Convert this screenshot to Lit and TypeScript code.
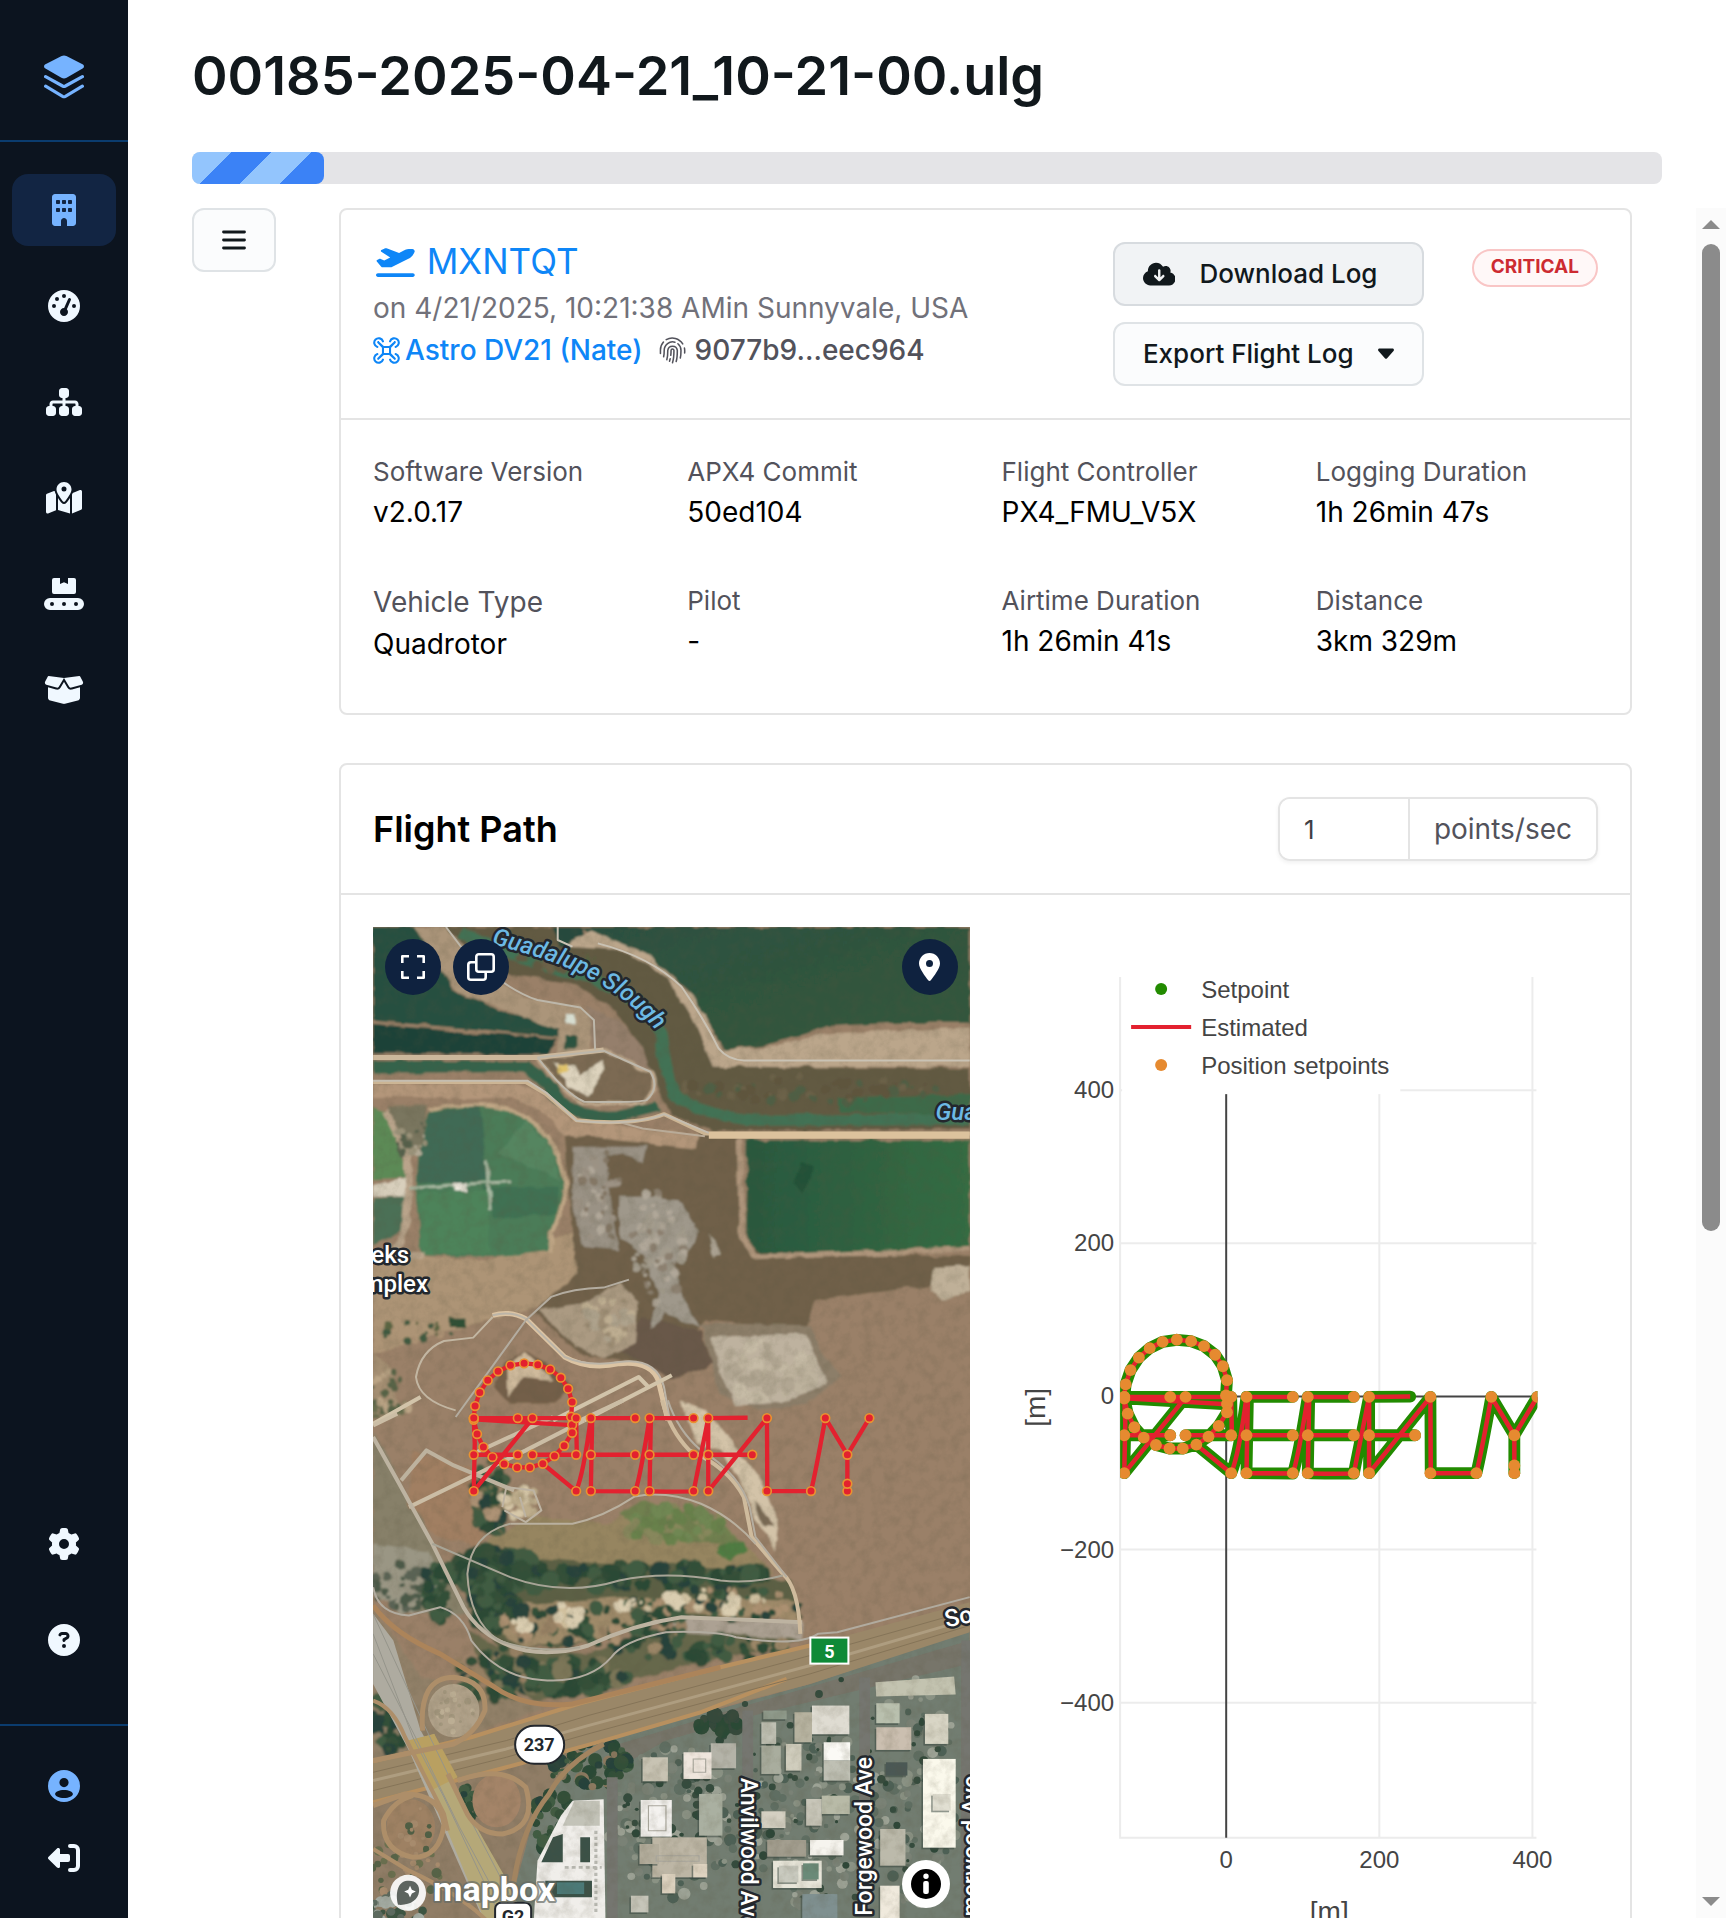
import { LitElement, html, svg, css } from "lit";
import { customElement } from "lit/decorators.js";

/* ---------- icons ---------- */

const icon = (viewBox: string, body: unknown, cls = "") =>
  html`<svg class="icon ${cls}" viewBox=${viewBox} fill="currentColor" aria-hidden="true">${body}</svg>`;

const icons = {
  layers: icon("0 0 40 46", svg`
    <path d="M17.6 1.1a6 6 0 0 1 4.8 0L39 9.6c1.3.7 1.3 2.9 0 3.6l-16.4 9.6a5.500 5.500 0 0 1-5.200 0L1 13.200c-1.300-.7-1.300-2.900 0-3.600z"/>
    <path d="M1.600 21.600 18.600 31q1.400.7 2.800 0l17-9.400M1.600 31.200l17 10.200q1.400.7 2.800 0l17-10.200" fill="none" stroke="currentColor" stroke-width="3.200" stroke-linecap="round"/>`, "logo"),
  building: icon("0 0 384 512", svg`<path d="M48 0C21.500 0 0 21.500 0 48V464c0 26.500 21.500 48 48 48h96V432c0-26.500 21.500-48 48-48s48 21.500 48 48v80h96c26.500 0 48-21.500 48-48V48c0-26.500-21.500-48-48-48H48zM64 240c0-8.800 7.200-16 16-16h32c8.800 0 16 7.200 16 16v32c0 8.800-7.200 16-16 16H80c-8.800 0-16-7.200-16-16V240zm112-16h32c8.800 0 16 7.200 16 16v32c0 8.800-7.200 16-16 16H176c-8.800 0-16-7.200-16-16V240c0-8.800 7.200-16 16-16zm80 16c0-8.800 7.200-16 16-16h32c8.800 0 16 7.200 16 16v32c0 8.800-7.200 16-16 16H272c-8.800 0-16-7.200-16-16V240zM80 96h32c8.800 0 16 7.200 16 16v32c0 8.800-7.200 16-16 16H80c-8.800 0-16-7.200-16-16V112c0-8.800 7.200-16 16-16zm80 16c0-8.800 7.200-16 16-16h32c8.800 0 16 7.200 16 16v32c0 8.800-7.200 16-16 16H176c-8.800 0-16-7.200-16-16V112zM272 96h32c8.800 0 16 7.200 16 16v32c0 8.800-7.200 16-16 16H272c-8.800 0-16-7.200-16-16V112c0-8.800 7.200-16 16-16z"/>`),
  gauge: icon("0 0 512 512", svg`<path d="M0 256a256 256 0 1 1 512 0A256 256 0 1 1 0 256zM288 96a32 32 0 1 0 -64 0 32 32 0 1 0 64 0zM256 416c35.300 0 64-28.700 64-64c0-17.400-6.900-33.100-18.100-44.600L366 161.700c5.300-12.100-.2-26.300-12.300-31.600s-26.300 .2-31.600 12.300L257.900 288c-.6 0-1.300 0-1.900 0c-35.300 0-64 28.700-64 64s28.700 64 64 64zM176 144a32 32 0 1 0 -64 0 32 32 0 1 0 64 0zM96 288a32 32 0 1 0 0-64 32 32 0 1 0 0 64zm352-32a32 32 0 1 0 -64 0 32 32 0 1 0 64 0z"/>`),
  sitemap: icon("0 0 576 512", svg`<path d="M208 80c0-26.500 21.500-48 48-48h64c26.500 0 48 21.500 48 48v64c0 26.500-21.500 48-48 48h-8v40H464c30.900 0 56 25.100 56 56v32h8c26.500 0 48 21.500 48 48v64c0 26.500-21.500 48-48 48H464c-26.500 0-48-21.500-48-48V368c0-26.500 21.500-48 48-48h8V288c0-4.400-3.600-8-8-8H312v40h8c26.500 0 48 21.500 48 48v64c0 26.500-21.500 48-48 48H256c-26.500 0-48-21.500-48-48V368c0-26.500 21.500-48 48-48h8V280H112c-4.400 0-8 3.600-8 8v32h8c26.500 0 48 21.500 48 48v64c0 26.500-21.500 48-48 48H48c-26.500 0-48-21.500-48-48V368c0-26.500 21.500-48 48-48h8V288c0-30.900 25.100-56 56-56H264V192h-8c-26.500 0-48-21.500-48-48V80z"/>`),
  map: icon("0 0 576 512", svg`<path d="M408 120c0 54.600-73.100 151.900-105.200 192c-7.700 9.600-22 9.600-29.600 0C241.100 271.900 168 174.600 168 120C168 53.700 221.700 0 288 0s120 53.700 120 120zm8 80.400c3.500-6.900 6.700-13.800 9.600-20.600c.5-1.200 1-2.500 1.500-3.700l116-46.400C558.900 123.400 576 135 576 152V422.800c0 9.800-6 18.600-15.100 22.300L416 503V200.400zM137.600 138.300c2.400 14.100 7.200 28.300 12.800 41.500c2.900 6.800 6.100 13.700 9.600 20.600V451.800L32.900 502.700C17.100 509 0 497.400 0 480.400V209.600c0-9.800 6-18.600 15.100-22.300l122.600-49zM327.800 332c13.900-17.400 35.700-45.700 56.200-77V504.300L192 449.400V255c20.500 31.300 42.300 59.600 56.200 77c20.500 25.600 59.100 25.600 79.600 0zM288 152a40 40 0 1 0 0-80 40 40 0 1 0 0 80z"/>`),
  conveyor: icon("0 0 40 32", svg`<path fill-rule="evenodd" d="M10 0h6v6l4-1.800L24 6V0h6a2 2 0 0 1 2 2v12a2 2 0 0 1-2 2H10a2 2 0 0 1-2-2V2a2 2 0 0 1 2-2zM6 20h28a6 6 0 0 1 0 12H6a6 6 0 0 1 0-12zm2 4a2 2 0 1 0 0 4 2 2 0 0 0 0-4zm12 0a2 2 0 1 0 0 4 2 2 0 0 0 0-4zm12 0a2 2 0 1 0 0 4 2 2 0 0 0 0-4z"/>`),
  box: icon("0 0 640 512", svg`<path d="M58.900 42.100c3-6.100 9.600-9.600 16.300-8.700L320 64 564.800 33.400c6.700-.8 13.300 2.700 16.300 8.700l41.700 83.400c9 17.900-.6 39.600-19.800 45.100L439.600 217.300c-13.900 4-28.800-1.900-36.200-14.300L320 64 236.600 203c-7.400 12.400-22.300 18.300-36.200 14.300L37.100 170.600c-19.300-5.500-28.800-27.200-19.800-45.100L58.900 42.100zM321.100 128l54.900 91.400c14.900 24.800 44.600 36.600 72.500 28.600L576 211.600v167c0 22-15 41.200-36.400 46.600l-204.100 51c-10.200 2.600-20.900 2.600-31 0l-204.100-51C79 419.700 64 400.500 64 378.500v-167L191.600 248c27.800 8 57.600-3.800 72.500-28.600L318.900 128h2.200z"/>`),
  gear: icon("0 0 512 512", svg`<path d="M495.900 166.600c3.200 8.700 .5 18.400-6.400 24.600l-43.300 39.400c1.100 8.300 1.700 16.800 1.700 25.400s-.6 17.100-1.700 25.400l43.300 39.400c6.900 6.200 9.600 15.900 6.400 24.600c-4.400 11.900-9.700 23.300-15.800 34.300l-4.700 8.100c-6.600 11-14 21.400-22.100 31.200c-5.900 7.200-15.700 9.600-24.500 6.800l-55.700-17.700c-13.400 10.300-28.200 18.900-44 25.400l-12.500 57.100c-2 9.100-9 16.300-18.200 17.800c-13.800 2.300-28 3.500-42.500 3.500s-28.700-1.200-42.500-3.500c-9.200-1.500-16.200-8.700-18.200-17.800l-12.500-57.100c-15.800-6.500-30.600-15.100-44-25.400L83.100 425.900c-8.800 2.800-18.600 .3-24.500-6.800c-8.100-9.800-15.500-20.200-22.100-31.200l-4.700-8.100c-6.100-11-11.400-22.400-15.800-34.300c-3.200-8.700-.5-18.400 6.400-24.600l43.300-39.400C64.600 273.100 64 264.600 64 256s.6-17.100 1.700-25.400L22.400 191.200c-6.900-6.200-9.600-15.900-6.400-24.600c4.400-11.900 9.700-23.300 15.800-34.300l4.700-8.100c6.600-11 14-21.400 22.100-31.200c5.900-7.200 15.700-9.600 24.500-6.800l55.700 17.700c13.400-10.300 28.200-18.900 44-25.400l12.500-57.100c2-9.100 9-16.300 18.200-17.800C227.300 1.200 241.500 0 256 0s28.700 1.200 42.500 3.500c9.200 1.500 16.200 8.700 18.200 17.800l12.500 57.100c15.800 6.500 30.600 15.100 44 25.400l55.700-17.700c8.800-2.800 18.600-.3 24.500 6.800c8.100 9.800 15.500 20.200 22.100 31.200l4.700 8.100c6.100 11 11.400 22.400 15.800 34.300zM256 336a80 80 0 1 0 0-160 80 80 0 1 0 0 160z"/>`),
  help: icon("0 0 512 512", svg`<path d="M256 512A256 256 0 1 0 256 0a256 256 0 1 0 0 512zM169.800 165.300c7.900-22.300 29.100-37.300 52.800-37.300h58.300c34.900 0 63.100 28.300 63.100 63.100c0 22.600-12.100 43.500-31.700 54.800L280 264.400c-.2 13-10.900 23.600-24 23.600c-13.300 0-24-10.700-24-24V250.500c0-8.600 4.600-16.500 12.100-20.800l44.300-25.400c4.700-2.700 7.600-7.700 7.600-13.100c0-8.400-6.800-15.100-15.100-15.100H222.600c-3.400 0-6.400 2.100-7.500 5.300l-.4 1.200c-4.400 12.500-18.200 19-30.600 14.600s-19-18.200-14.600-30.600l.4-1.200zM224 352a32 32 0 1 1 64 0 32 32 0 1 1 -64 0z"/>`),
  user: icon("0 0 32 32", svg`<path fill-rule="evenodd" d="M16 0a16 16 0 1 1 0 32 16 16 0 0 1 0-32zm0 8a4.600 4.600 0 1 0 0 9.200A4.600 4.600 0 0 0 16 8zm0 12c-5 0-8.900 2-8.900 3.900S11 28 16 28s8.900-2 8.900-4.100S21 20 16 20z"/>`),
  logout: icon("0 0 32 32", svg`<path d="M.6 14.700 9 6.400c1.100-1 3-.4 3 1.200V12h8a2 2 0 0 1 2 2v4a2 2 0 0 1-2 2h-8v4.400c0 1.600-1.900 2.200-3 1.200L.6 17.300a1.900 1.900 0 0 1 0-2.600z"/><path d="M22 4h4a4 4 0 0 1 4 4v16a4 4 0 0 1-4 4h-4" fill="none" stroke="currentColor" stroke-width="4" stroke-linecap="round"/>`),
  bars: icon("0 0 24 24", svg`<path d="M1.500 4h21M1.500 12h21M1.500 20h21" stroke="currentColor" stroke-width="2.800" stroke-linecap="round"/>`, "bars"),
  plane: icon("0 0 640 512", svg`<path d="M381 114.900L186.100 41.800c-16.700-6.200-35.200-5.300-51.100 2.700L89.100 67.400C78 73 77.200 88.500 87.600 95.200l146.900 94.500L136 240 77.800 214.100c-8.700-3.900-18.800-3.700-27.300 .6L18.300 230.800c-9.300 4.700-11.800 16.800-5 24.700l73.100 85.300c6.100 7.100 15 11.200 24.300 11.200H248.400c5 0 9.900-1.200 14.300-3.400L535.600 212.200c46.500-23.300 82.500-63.300 100.800-112C645.900 75 627.200 48 600.200 48H542.400c-20.200 0-40.200 4.800-58.200 14L381 114.900zM0 480c0 17.700 14.300 32 32 32H608c17.700 0 32-14.300 32-32s-14.300-32-32-32H32c-17.700 0-32 14.300-32 32z"/>`),
  drone: icon("0 0 26 26", svg`<g fill="none" stroke="currentColor" stroke-width="2" stroke-linecap="round" stroke-linejoin="round">
    <path d="M4.200 9.600A4.300 4.300 0 1 1 9.600 4.200M16.400 4.200a4.300 4.300 0 1 1 5.400 5.400M21.800 16.400a4.300 4.300 0 1 1-5.400 5.400M9.600 21.800a4.300 4.300 0 1 1-5.400-5.400"/>
    <path d="M5 5l5 4.600h6L21 5M5 21l5-4.600h6l5 4.600M5 5l4.600 5v6L5 21M21 5l-4.600 5v6l4.600 5"/></g>`),
  finger: icon("0 0 28 28", svg`<g fill="none" stroke="currentColor" stroke-width="1.600" stroke-linecap="round">
    <path d="M1.500 17v-3.500A12.400 12.400 0 0 1 4.600 5.300M7.500 2.700A12.600 12.600 0 0 1 24.600 7.200M26.400 11.500c.4 2 .3 3.600.2 5"/>
    <path d="M4.800 20.500c.6-2 .6-4.600.6-6.800A8.700 8.700 0 0 1 16.500 5.400M19.600 7a8.700 8.700 0 0 1 3.200 6.800c0 3 0 5.500-.7 8"/>
    <path d="M8.100 23.500c1-3.300 1-6.300 1-9.600a5 5 0 0 1 9.900 0c0 4 0 7.800-1.200 11.400"/>
    <path d="M12.200 19c.3-1.700.3-3.300.3-5a1.500 1.500 0 0 1 3 0c0 4.600-.2 8.800-1.500 12.600M11.600 22.500l-.7 2.600"/></g>`),
  cloud: icon("0 0 640 512", svg`<path fill-rule="evenodd" d="M144 480C64.500 480 0 415.500 0 336c0-62.800 40.200-116.200 96.200-135.900c-.1-2.700-.2-5.400-.2-8.100c0-88.400 71.600-160 160-160c59.300 0 111 32.200 138.700 80.200C409.900 102 428.300 96 448 96c53 0 96 43 96 96c0 12.200-2.300 23.800-6.400 34.600C596 238.400 640 290.100 640 352c0 70.700-57.300 128-128 128H144zm79-167 80 80c9.400 9.400 24.600 9.400 33.900 0l80-80c9.400-9.400 9.400-24.600 0-33.900s-24.600-9.400-33.900 0l-39 39V184c0-13.300-10.700-24-24-24s-24 10.700-24 24v134.100l-39-39c-9.400-9.400-24.600-9.400-33.900 0s-9.400 24.600 0 33.900z"/>`),
  caret: icon("0 0 16 12", svg`<path d="M1.500.5h13c1.300 0 1.900 1.500 1 2.400l-6.400 7.300a1.500 1.500 0 0 1-2.200 0L.5 2.900C-.4 2 .2.5 1.500.5z"/>`, "caret"),
  expand: icon("0 0 24 24", svg`<path d="M1.300 8V1.300H8M16 1.300h6.700V8M22.700 16v6.700H16M8 22.700H1.300V16" fill="none" stroke="currentColor" stroke-width="2.600" stroke-linejoin="round"/>`),
  copy: icon("0 0 28 28", svg`<g fill="none" stroke="currentColor" stroke-width="2.600" stroke-linejoin="round"><rect x="9.300" y="1.300" width="17.400" height="17.400" rx="2.500"/><path d="M9.300 9.300H3.800a2.500 2.500 0 0 0-2.500 2.500v12.400a2.500 2.500 0 0 0 2.500 2.500h12.400a2.500 2.500 0 0 0 2.500-2.500v-5.500"/></g>`),
  pin: icon("0 0 384 512", svg`<path d="M215.700 499.200C267 435 384 279.400 384 192C384 86 298 0 192 0S0 86 0 192c0 87.400 117 243 168.300 307.200c12.300 15.300 35.100 15.300 47.400 0zM192 128a64 64 0 1 1 0 128 64 64 0 1 1 0-128z"/>`),
  info: icon("0 0 30 30", svg`<path fill-rule="evenodd" d="M15 0a15 15 0 1 1 0 30 15 15 0 0 1 0-30zm0 4.600a2.700 2.700 0 1 0 0 5.400 2.700 2.700 0 0 0 0-5.400zM14.200 12a2 2 0 0 0-2 2v9a2 2 0 0 0 2 2h1.600a2 2 0 0 0 2-2v-9a2 2 0 0 0-2-2z"/>`),
};

/* ---------- flight data, in thirds of a map pixel ---------- */

const circlePoints = [
  [101, 263], [105, 227], [119, 186], [143, 150], [174, 123], [211, 105], [252, 99], [293, 103],
  [330, 117], [362, 142], [384, 175], [396, 215], [393, 259], [396, 283], [396, 307], [372, 346],
  [343, 377], [308, 400], [269, 411], [231, 411], [192, 401], [157, 380], [130, 350], [111, 311], [101, 268],
];
const on = (y: number, xs: number[]) => xs.map((x) => [x, y]);
const waypoints = [
  ...circlePoints,
  ...on(263, [101, 233, 277, 408, 452, 585, 628, 760, 804, 980, 1155, 1287]),
  ...on(373, [101, 233, 277, 408, 452, 585, 628, 760, 804, 936, 1221]),
  ...on(482, [101, 408, 452, 585, 628, 760, 804, 980, 1112, 1221]),
  [1221, 460],
];
const track =
  `M${circlePoints.map((p) => p.join(" ")).join("L")}` +
  "M101 263H408L410 373H277M101 267L396 284M101 263L104 340L101 482L270 273M101 373H233" +
  "M308 400L408 482Q430 430 452 263H585M456 263L452 482L585 483Q600 440 628 263H760M632 263L628 482Q660 484 760 483L804 263L922 262" +
  "M452 373H585M628 373H760M804 263V482L980 263L981 482H1112Q1125 430 1155 263L1221 373V482M1221 373L1287 263M804 373H936";

/* ---------- aerial view ---------- */

const random = (seed: number) => () => {
  seed = (seed * 1664525 + 1013904223) % 4294967296;
  return seed / 4294967296;
};

/** Scatters round clumps in an ellipse: trees, shrubs, parked cars. */
const scatter = (seed: number, count: number, cx: number, cy: number, rx: number, ry: number, size: number, colors: string[]) => {
  const next = random(seed);
  return Array.from({ length: count }, () => {
    const angle = next() * Math.PI * 2;
    const reach = Math.sqrt(next());
    const r = size * (0.5 + next());
    const fill = colors[Math.floor(next() * colors.length)];
    return svg`<ellipse cx=${Math.round(cx + Math.cos(angle) * rx * reach)} cy=${Math.round(cy + Math.sin(angle) * ry * reach)} rx=${Math.round(r)} ry=${Math.round(r * 1.15)} fill=${fill} />`;
  });
};

const tree = ["#2c4a36", "#27433a", "#335039", "#3f5c42"];
const scrub = ["#6b6a4b", "#5b6044", "#ad9274", "#7c7053"];
const pale = ["#bdb29d", "#b1a692", "#c6bba6"];
const street = ["#4e6054", "#5f6e62", "#8a9284", "#7a8276", "#9da396"];

const buildings: [number, number, number, number, string][] = [
  [1135, 915, 96, 86, "#dfdcd2"], [1300, 908, 60, 60, "#b9c0ae"], [1425, 940, 60, 90, "#d8d5c5"],
  [1300, 980, 90, 68, "#cbbfb0"], [1090, 935, 45, 90, "#b6b29f"], [1005, 965, 38, 65, "#bfc0b3"],
  [1165, 1025, 68, 55, "#fbfaf5"], [1165, 1080, 68, 60, "#bfc0b4"], [1068, 1030, 40, 80, "#d0cdbd"],
  [1005, 1035, 50, 85, "#a9ad9e"], [875, 1028, 65, 75, "#b4b3a8"], [805, 1055, 72, 80, "#efe6dd"],
  [700, 1070, 65, 72, "#c8c3b3"], [695, 1198, 80, 110, "#f4f2ef"], [845, 1180, 60, 125, "#aab0a1"],
  [1420, 1075, 84, 266, "#fbf9ec"], [1325, 1085, 55, 40, "#4c5954"], [1160, 1185, 72, 55, "#b8baa7"],
  [1120, 1195, 40, 80, "#c8c6b9"], [1005, 1232, 62, 50, "#d4d0c2"], [1310, 1285, 65, 110, "#bcbaab"],
  [1130, 1318, 86, 46, "#f6f4ee"], [1020, 1318, 100, 50, "#a39e8f"], [1035, 1380, 125, 82, "#e8e6da"],
  [1112, 1388, 40, 48, "#6b8a78"], [725, 1310, 140, 120, "#bdb6a5"], [692, 1330, 50, 60, "#b3ad9c"],
  [750, 1420, 34, 58, "#ded3c0"], [830, 1390, 36, 40, "#ded3c0"],
  [670, 1485, 45, 50, "#c6c5b9"], [1310, 1455, 50, 110, "#f0eadd"], [1110, 1480, 90, 100, "#7f9090"],
  [1010, 930, 60, 26, "#8f9a8b"], [1050, 1395, 50, 50, "#c9cabf"], [1445, 1180, 46, 50, "#e1dfd2"],
];

const roadPath = (d: string, color: string, width: number, opacity = 1) =>
  svg`<path d=${d} fill="none" stroke=${color} stroke-width=${width} stroke-opacity=${opacity} stroke-linejoin="round" vector-effect="non-scaling-stroke" />`;

const northGround = svg`
  <rect x="0" y="0" width="1560" height="1500" fill="#9a8068"/>
  <path d="M8 1000 300 1020 520 940 560 1120 300 1200 8 1300z" fill="#ad9476"/>
  <path d="M500 640H950L965 990 1210 1000 1540 1010V1080L1140 1140 1120 1230 860 1200 820 1260 720 1330 540 1300 420 1180 530 1060z" fill="#6f614a"/>
  <path d="M700 1190 850 1230 880 1330 780 1380 640 1290z" fill="#695948"/>
  <path d="M8 21H110L160 100 210 205 330 270 480 318 485 352 300 330 8 302z" fill="#27503f"/>
  <path d="M8 312 300 342 478 358 462 400H8z" fill="#1d4337"/>
  <path d="M110 21H230L330 190 400 230 540 260 575 300 560 400 480 400 485 330 330 262 215 205z" fill="#ab957a"/>
  <path d="M195 21H480L500 80 620 80 740 130 830 230 900 440 1540 445V625L880 632 770 585 720 460 690 370 620 260 520 190 360 165 270 120z" fill="#625a42"/>
  <path d="M560 260 640 300 700 380 720 450 600 390 570 380z" fill="#957f6c"/>
  <path d="M230 40Q400 130 560 170Q715 240 745 340Q755 440 780 520Q850 590 1000 600L1540 598" fill="none" stroke="#437254" stroke-width="34"/>
  <path d="M1200 535 1540 525V585L1210 575z" fill="#3d6b48"/>
  <path d="M8 440H400Q450 470 490 545Q560 600 640 590L740 560" fill="none" stroke="#34634b" stroke-width="34"/>
  <path d="M540 21H1540V308L1360 308 1180 318 1010 378 912 388 860 290 815 200 720 115 600 70z" fill="url(#pond)"/>
  <path d="M470 21H545L540 78 490 80z" fill="#254a3c"/>
  <path d="M500 80 560 30 720 105 830 225 905 390 1010 384 1170 340 1540 322V440H880L830 300 760 170 650 90z" fill="#bba68b"/>
  <path d="M430 412 600 392 720 455Q745 505 700 550H550Q490 510 430 412z" fill="#7c6b53" stroke="#c6af93" stroke-width="9"/>
  <path d="M470 425 525 435 530 470 600 420 605 450 560 530 510 500z" fill="#ddd3bd"/>
  <path d="M480 430h30v26h-30z" fill="#e0c26a"/>
  <path d="M8 512H370Q430 525 510 622L840 664" fill="none" stroke="#b3967a" stroke-width="44"/>
  <path d="M8 560 40 572 92 740 90 775 8 780z" fill="#5b8a57"/>
  <path d="M8 835 92 828 84 930 8 975z" fill="#4c7056"/>
  <path d="M45 560 150 555 145 650 100 715z" fill="#7a765f"/>
  <path d="M155 575Q300 525 400 595Q485 650 498 800Q492 880 460 935V992Q300 1018 132 1004L118 830 125 700z" fill="#4b7c58"/>
  <path d="M155 578 280 555 300 780 122 790 125 700z" fill="#3f6b54"/>
  <path d="M290 800H485L480 880 320 900z" fill="#3f7152"/>
  <path d="M122 820 300 810 310 1000 135 1004z" fill="#4e835a"/>
  <path d="M400 600 470 680 490 780 330 700z" fill="#558561"/>
  <path d="M155 570Q300 530 400 590Q490 655 505 800Q500 880 465 935V995" fill="none" stroke="#bfa685" stroke-width="12"/>
  <path d="M40 570 95 700 100 800 90 940 60 1000 140 1004" fill="none" stroke="#b9a48b" stroke-width="20"/>
  <path d="M8 795 90 775V830H8z" fill="#d8cfbc"/>
  <path d="M100 805 240 792 360 785M300 720 308 870" fill="none" stroke="#a9b8a2" stroke-width="9"/>
  <path d="M215 785h30v26h-30z" fill="#eee9de"/>
  <path d="M970 660H1540V978L1250 995 1000 1000 966 955z" fill="url(#field)"/>
  <path d="M950 655 955 960 990 1012 1540 985" fill="none" stroke="#af957b" stroke-width="16"/>
  <path d="M1110 720 1140 740 1110 820 1090 790z" fill="#245139"/>
  <path d="M520 680H710L700 735 650 700H605L625 900 640 990 550 980 520 860z" fill="#9a9285"/>
  <path d="M640 830 700 830 790 840 840 930 830 970 780 1040 800 1130 850 1220 760 1180 720 1230 740 1120 700 1000 640 950z" fill="#9f988b"/>
  <path d="M870 940 905 1000 880 1010z" fill="#aba292"/>
  <path d="M540 1150 640 1090 690 1140 680 1270 600 1310 530 1280 430 1170z" fill="#ab9a82"/>
  <path d="M1450 1040 1540 1035V1110L1470 1145 1440 1110z" fill="#bfb098"/>
  <path d="M850 1210 1130 1215 1160 1290 1210 1370 1120 1450 1000 1470 900 1420z" fill="#8c7e69"/>
  <path d="M875 1250 1120 1240 1150 1320 1170 1390 1080 1440 940 1455 900 1350z" fill="#beb29f"/>
  <path d="M345 1330 400 1295 480 1350 520 1400 470 1450 360 1450 320 1400z" fill="#735f48"/>
  <path d="M350 1340 400 1298 475 1380 400 1370 352 1425z" fill="#cfba9c"/>
  <path d="M8 1300 60 1350 80 1500H8z" fill="#a48e72"/>
  ${scatter(3, 26, 105, 650, 40, 60, 7, ["#b9b09c", "#55604c", "#9a9279"])}
  ${scatter(5, 20, 110, 1230, 110, 40, 7, ["#3c5a3f", "#5a6542", "#ad9274"])}
  ${scatter(7, 30, 50, 1430, 50, 80, 9, ["#6b7050", "#bba586", "#566346"])}
  ${scatter(8, 40, 585, 830, 56, 150, 8, ["#b0a799", "#857866", "#9c9284"])}
  ${scatter(9, 60, 740, 970, 70, 180, 9, ["#b0a799", "#8c8070", "#a39b8c"])}
  ${scatter(10, 40, 610, 1200, 70, 70, 10, ["#bdad91", "#9c8c73", "#aea28c"])}
  ${scatter(11, 40, 1030, 1345, 130, 90, 14, pale)}
  ${scatter(12, 60, 1120, 510, 340, 40, 10, ["#5e553e", "#6c6248", "#4f5f44"])}
  ${scatter(13, 30, 480, 120, 110, 30, 10, ["#625a42", "#6c6248", "#56623f"])}
  <path d="M205 1195h40v25h-40z" fill="#2f5035"/>
  <path d="M498 285h30v28h-30z" fill="#d7ddd0"/>
  <path d="M500 345h30v40h-30z" fill="#2c533f"/>`;

const southGround = svg`
  <rect x="0" y="50" width="1560" height="1600" fill="#9a8068"/>
  <path d="M8 90 80 240 160 430 260 640 120 640 8 560z" fill="#878069"/>
  <path d="M8 430 150 450 200 590 60 610 8 590z" fill="#9a9684"/>
  <path d="M110 150 260 200 300 400 270 440 160 400 100 320z" fill="#a17f62"/>
  <path d="M300 420 420 350 620 370 700 300 900 360 1040 520 600 560 300 520z" fill="#968560"/>
  <path d="M640 340 700 300 900 360 960 430 800 420 690 400z" fill="#70804f"/>
  <path d="M900 430 960 420 970 450 920 485 890 460z" fill="#4f7b42"/>
  <path d="M220 470 400 470 600 490 800 490 1080 540 1110 650 700 660 500 740 330 740 250 600z" fill="#5b6044"/>
  <path d="M290 590 420 610 640 590 1090 600 1100 660 800 640 560 720 400 740 300 680z" fill="#a08b6b"/>
  <path d="M250 690 330 740 560 760 780 680 1110 720 800 800 420 900 300 830z" fill="#66674c"/>
  <path d="M780 650 1110 665V720L900 700 780 690z" fill="#aca193"/>
  <path d="M800 0 860 30 920 110 1000 230 1050 360 1040 450 1000 380 960 270 900 150 840 130z" fill="#d3c3a8"/>
  <path d="M990 300 1040 370 1010 380z" fill="#7a6a55"/>
  ${scatter(20, 90, 320, 510, 110, 56, 20, tree)}
  ${scatter(21, 90, 640, 530, 410, 36, 18, tree)}
  ${scatter(22, 70, 320, 610, 70, 80, 15, tree)}
  ${scatter(23, 80, 560, 680, 250, 60, 13, [...tree, "#ab9071", "#968063"])}
  ${scatter(24, 90, 880, 610, 230, 46, 10, [...tree, "#ab9071", "#d2c3a3"])}
  ${scatter(25, 90, 480, 830, 180, 50, 18, [...tree, "#7c7658"])}
  ${scatter(26, 50, 860, 745, 250, 34, 13, [...tree, "#9c8768"])}
  ${scatter(27, 70, 310, 290, 44, 120, 13, [...tree, ...scrub])}
  ${scatter(28, 50, 80, 560, 80, 70, 10, ["#5a6455", "#4c5a48", "#9a9684"])}
  ${scatter(29, 36, 180, 560, 40, 100, 13, tree)}
  ${scatter(30, 60, 780, 370, 140, 50, 13, ["#67814c", "#6f8753", "#87875c"])}
  ${scatter(31, 14, 510, 645, 30, 34, 11, ["#dacdb0", "#d0c09d"])}
  ${scatter(32, 12, 780, 598, 26, 18, 10, ["#dacdb0"])}
  ${scatter(33, 12, 920, 615, 34, 22, 10, ["#dacdb0"])}
  ${scatter(34, 20, 385, 300, 46, 52, 12, ["#d7c8a9", "#bead8c"])}
  ${scatter(35, 10, 390, 672, 24, 16, 8, ["#dacdb0"])}
  ${scatter(36, 10, 660, 610, 34, 16, 8, ["#dacdb0"])}
  <path d="M8 610 130 830 260 860 450 920 8 1110z" fill="#918067"/>
  ${scatter(37, 60, 320, 820, 100, 80, 13, [...tree, "#968063"])}
  ${scatter(38, 50, 50, 960, 50, 90, 12, tree)}`;

const cityGround = svg`
  <path d="M8 1200 600 1020 1130 850 1540 690V1660H8z" fill="#727d71"/>
  <path d="M640 1030 950 920 1540 720V790L1000 940 760 1020 640 1100z" fill="#77756a"/>
  <path d="M8 1190 560 1030 430 1210 340 1600H8z" fill="#907d66"/>
  ${scatter(40, 60, 560, 1090, 110, 70, 13, [...tree, "#8c7a60"])}
  ${scatter(41, 120, 780, 1260, 170, 230, 11, street)}
  ${scatter(42, 130, 1120, 1230, 150, 290, 10, street)}
  ${scatter(43, 110, 1400, 1170, 115, 350, 10, street)}
  ${scatter(49, 70, 1180, 1180, 330, 360, 8, ["#2f4638", "#344b3c"])}
  ${scatter(50, 30, 760, 1230, 120, 200, 9, ["#2f4638", "#344b3c"])}
  ${scatter(44, 30, 900, 965, 60, 26, 14, ["#2c4a36", "#34483b"])}
  ${scatter(45, 50, 470, 1280, 50, 120, 13, tree)}
  ${scatter(46, 40, 90, 1420, 90, 120, 9, ["#6b7050", "#a78b6d", "#566346"])}
  ${scatter(47, 26, 255, 1230, 24, 80, 10, tree)}
  ${scatter(48, 40, 60, 1530, 80, 50, 11, ["#3e5443", "#a3aba2", "#5b6a5e"])}
  <path d="M622 1130V1660M970 930V1660M1270 830V1660M1532 720V1660" fill="none" stroke="#74766f" stroke-width="28"/>
  <path d="M1298 845 1500 828 1504 882 1300 888z" fill="#c3c3b0"/>
  ${buildings.map(([x, y, w, h, c]) => svg`<rect x=${x - 4} y=${y + 5} width=${w} height=${h} fill="#3b4841" fill-opacity=".55"/><rect x=${x} y=${y} width=${w} height=${h} fill=${c}/>`)}
  <path d="M715 1215H760V1290H715zM830 1075H862V1115H830zM735 1365H845V1382H735z" fill="none" stroke="#a9a79d" stroke-width="3"/>
  <path d="M490 1245 520 1200 600 1196 606 1660H415L430 1380z" fill="#f0eeea"/>
  <path d="M525 1200H590V1275H495z" fill="#c3c3b8"/>
  <path d="M470 1310 495 1300V1385H440zM540 1310H565V1385H540zM450 1440H570V1490H450z" fill="#3a5147"/>
  <path d="M480 1445H550V1480H480z" fill="#4c7a78"/>
  <path d="M500 1400H595M580 1290V1540" stroke="#b9b9b2" stroke-width="8" stroke-dasharray="10 8" fill="none"/>
  <ellipse cx="215" cy="930" rx="66" ry="80" fill="#b0a189"/>
  <ellipse cx="325" cy="1200" rx="62" ry="80" fill="#a48468"/>
  <ellipse cx="105" cy="1280" rx="62" ry="84" fill="#9e8164"/>
  ${scatter(51, 22, 215, 930, 54, 66, 6, ["#a2967d", "#bcae94"])}
  ${scatter(52, 14, 120, 1290, 44, 70, 7, ["#4f5f44", "#a78b6d"])}`;

const northRoads = svg`
  ${roadPath("M8 412H430L600 390", "#cbb79b", 5)}
  ${roadPath("M8 486H400L450 520 530 600Q680 618 755 582L860 640H1540", "#ccb594", 4)}
  ${roadPath("M870 645H1540", "#dcc29d", 7)}
  ${roadPath("M640 606 700 625 860 648", "#b9ab98", 2)}
  ${roadPath("M195 21 240 90Q350 210 430 240L540 262 575 300 578 388", "#bdb7aa", 2)}
  ${roadPath("M430 412 600 392 720 455Q745 505 710 540 690 548 550 545 500 520 430 412", "#bdb7aa", 2)}
  ${roadPath("M482 21V60L520 80M585 70Q720 110 800 200Q860 300 895 385 920 420 960 421H1540", "#c9c2b4", 2)}
  ${roadPath("M8 482H405L455 520 530 602Q680 618 755 582L870 638", "#c4bdb0", 2)}
  ${roadPath("M315 1185Q360 1170 400 1195L500 1310Q560 1350 640 1330 720 1320 740 1380L765 1500", "#dcc4a3", 5)}
  ${roadPath("M315 1185Q360 1170 400 1195L500 1310Q560 1340 640 1325 735 1310 755 1400L770 1500", "#bcb5a8", 2)}
  ${roadPath("M315 1190 265 1252 190 1262Q130 1290 118 1370 125 1440 220 1470", "#c2b6a2", 2)}
  ${roadPath("M665 1078 600 1102Q520 1105 465 1130L400 1200 220 1490", "#b3aca0", 2)}
  ${roadPath("M8 1510 130 1430M470 1500 690 1370 715 1400M550 1500 775 1365", "#d2c4aa", 4)}`;

const southRoads = svg`
  ${roadPath("M470 50 265 160M8 75 70 40M550 60 400 150 100 320M650 0 540 60", "#cbbda5", 4)}
  ${roadPath("M8 110 75 250 160 430 240 620Q290 720 400 750 480 765 560 735 680 670 800 650L1110 665", "#bdb3a1", 4)}
  ${roadPath("M80 240 145 150 215 195 370 270", "#bdb29e", 4)}
  ${roadPath("M750 0Q770 90 820 150 920 200 960 290L980 410 1060 520Q1100 560 1105 700", "#cfbb9d", 4)}
  ${roadPath("M765 0Q790 90 850 150 950 220 975 320L990 410 1070 530", "#b4ada0", 2)}
  ${roadPath("M340 320 350 260 420 270 440 330 400 365 345 330M385 290 400 350", "#bdb3a2", 2)}
  ${roadPath("M360 370H520Q600 350 680 288 760 270 850 310 930 350 990 430", "#b9b09f", 2)}
  ${roadPath("M360 370Q260 400 250 520 255 660 330 720 430 760 540 740", "#aca797", 2)}
  ${roadPath("M160 430 360 530Q500 590 640 540 760 510 900 540 980 550 1060 525", "#a7a496", 2)}
  ${roadPath("M8 560Q20 640 100 645L180 620Q240 640 260 720 330 830 440 838 560 850 620 770 650 720 760 695 880 690 940 710 1100 740 1150 700L1200 695 1540 590", "#b1ab9f", 2)}
  <path d="M8 1082 260 1010 540 908 900 800 1130 735 1540 605V695L1130 850 850 935 600 1020 350 1100 8 1205z" fill="#9a8768"/>
  ${roadPath("M8 1082 260 1010 540 908 900 800 1130 735", "#b8905f", 4)}
  ${roadPath("M8 1205 350 1100 600 1020 850 935 1070 835", "#b8905f", 4)}
  ${roadPath("M8 1140 350 1045 560 975 1130 795 1540 655", "#ae9d80", 3)}
  ${roadPath("M8 1115 350 1020 560 945 1130 765 1540 630M8 1170 350 1070 560 1000 1130 820 1540 675", "#857458", 1)}
  ${roadPath("M8 615Q60 700 180 760L320 860Q400 925 520 910L900 800", "#ac845a", 5)}
  ${roadPath("M600 1030Q500 1090 460 1180 390 1280 370 1440L350 1560", "#a28460", 5)}
  <path d="M8 640 60 720 130 990 345 1430 440 1660H330L100 1050 8 850z" fill="#aeaba0"/>
  <path d="M98 1020 165 1000 225 1180 345 1425 440 1660H330L160 1180z" fill="#b5a878"/>
  <path d="M98 1020 165 1000 225 1130 155 1170z" fill="#b9a061"/>
  ${roadPath("M8 700 110 1010 190 1190 380 1660M8 760 130 1040 230 1280 360 1560M8 640 150 1000 250 1240 420 1620", "#95948a", 1)}
  ${roadPath("M135 990Q125 830 215 830 300 840 295 930 270 1000 215 1030L8 1080", "#ad8e69", 5)}
  ${roadPath("M225 1140Q340 1090 400 1160 430 1280 340 1300 280 1300 250 1240L200 1120", "#ad8e69", 5)}
  ${roadPath("M8 1215 90 1180Q180 1180 190 1270 180 1370 110 1370 30 1350 35 1260 60 1200 110 1185", "#ad8e69", 5)}
  ${roadPath("M8 900Q60 920 90 1010L190 1240 200 1290", "#ad8e69", 4)}
  ${roadPath("M8 1345 100 1410Q230 1480 300 1560", "#ad8e69", 4)}`;

const aerial = svg`
  <defs>
    <linearGradient id="pond" x1="0" y1="0" x2="1" y2="1"><stop offset="0" stop-color="#2c5040"/><stop offset="1" stop-color="#33583c"/></linearGradient>
    <linearGradient id="field" x1="0" y1="0" x2="1" y2="0"><stop offset="0" stop-color="#29583e"/><stop offset="1" stop-color="#346c43"/></linearGradient>
    <filter id="rough" x="0" y="0" width="100%" height="100%">
      <feTurbulence type="fractalNoise" baseFrequency=".05" numOctaves="3" seed="4" result="n"/>
      <feDisplacementMap in="SourceGraphic" in2="n" scale="7" xChannelSelector="R" yChannelSelector="G"/>
      <feGaussianBlur stdDeviation="1"/>
    </filter>
    <filter id="soft" x="0" y="0" width="100%" height="100%"><feGaussianBlur stdDeviation=".6"/></filter>
    <filter id="grain" x="0" y="0" width="100%" height="100%">
      <feTurbulence type="fractalNoise" baseFrequency=".09" numOctaves="5" seed="9"/>
      <feColorMatrix values="0 0 0 0 .1  0 0 0 0 .09  0 0 0 0 .05  1.300 0 0 0 -.52"/>
    </filter>
    <path id="slough" d="M118 17Q187 34 223 55Q259 74 290 112"/>
  </defs>
  <g filter="url(#rough)">
    <rect x="-20" y="-20" width="640" height="1040" fill="#9a8068"/>
    <g transform="translate(-3 -7) scale(.3891 .3333)">
      ${northGround}
      <g transform="translate(0 1440)">${southGround}</g>
    </g>
  </g>
  <g filter="url(#soft)">
    <g transform="translate(-3 -7) scale(.3891 .3333)">
      <g transform="translate(0 1440)">${cityGround}</g>
    </g>
  </g>
  <rect width="596" height="1000" filter="url(#grain)" opacity=".3"/>
  <g transform="translate(-3 -7) scale(.3891 .3333)">
    ${northRoads}
    <g transform="translate(0 1440)">${southRoads}</g>
  </g>`;

const mapLabels = svg`
  <g class="label">
    <text class="water"><textPath href="#slough">Guadalupe Slough</textPath></text>
    <text class="water" x="562" y="193">Gua</text>
    <text x="36" y="336" text-anchor="end">eks</text>
    <text x="55" y="365" text-anchor="end">mplex</text>
    <text x="573" y="700" transform="rotate(-12 573 700)">So</text>
    <text class="street" transform="translate(368 850) rotate(90)">Anvilwood Ave</text>
    <text class="street" transform="translate(499 988) rotate(-90)">Forgewood Ave</text>
    <text class="street" text-anchor="end" transform="translate(605 848) rotate(-90)">merwood Ave</text>
  </g>
  <rect x="437" y="710" width="38" height="26" fill="#0f8a37" stroke="#fff" stroke-width="2"/>
  <text class="shield light" x="456" y="730">5</text>
  <rect x="142" y="798" width="49" height="38" rx="19" fill="#fff" stroke="#23272d" stroke-width="2"/>
  <text class="shield" x="166" y="823">237</text>
  <rect x="122" y="975" width="36" height="34" rx="6" fill="#fff" stroke="#23272d" stroke-width="2"/>
  <text class="shield" x="140" y="995">G2</text>`;

const mapbox = svg`
  <g>
    <circle cx="35" cy="965" r="18" fill="#fff" fill-opacity=".9"/>
    <path d="M25 977c-3-12 0-23 9-24 8-1 13 4 12 11-1 8-9 14-21 13z" fill="#5d645f"/>
    <path d="M37 958l1.800 4 4 1.800-4 1.800-1.800 4-1.800-4-4-1.800 4-1.800z" fill="#fff"/>
    <text class="wordmark" x="60" y="973">mapbox</text>
  </g>`;

const xTicks = [[224, "0"], [377, "200"], [530, "400"]] as const;
const yTicks = [[163, "400"], [316, "200"], [469, "0"], [622, "−200"], [775, "−400"]] as const;

const details = [
  ["Software Version", "v2.0.17"],
  ["APX4 Commit", "50ed104"],
  ["Flight Controller", "PX4_FMU_V5X"],
  ["Logging Duration", "1h 26min 47s"],
  ["Vehicle Type", "Quadrotor"],
  ["Pilot", "-"],
  ["Airtime Duration", "1h 26min 41s"],
  ["Distance", "3km 329m"],
];

const base = css`
  * { box-sizing: border-box; }
  .icon { display: block; height: 32px; width: auto; flex: none; }
  a { color: inherit; text-decoration: none; }
  button { font: inherit; cursor: pointer; }
`;

@customElement("side-nav")
export class SideNav extends LitElement {
  static styles = [base, css`
    :host { display: flex; flex-direction: column; background: #0c141f; color: #f0f8ff; }
    .brand { display: flex; justify-content: center; padding: 55px 0 39px; border-bottom: 2px solid #0b3c6e; color: #76b3ff; }
    .logo { height: 46px; }
    nav { flex: 1; display: flex; flex-direction: column; gap: 24px; padding: 32px 12px 48px; }
    .item { height: 72px; display: flex; align-items: center; justify-content: center; border-radius: 16px; }
    .active { background: #122543; color: #76b3ff; }
    .spacer { flex: 1; }
    .account { display: flex; flex-direction: column; align-items: center; gap: 40px; padding: 44px 0; border-top: 2px solid #0b3c6e; }
    .me { color: #76b3ff; }
  `];
  render() {
    const item = (label: string, glyph: unknown, active = false) =>
      html`<a class="item ${active ? "active" : ""}" href="#" aria-label=${label}>${glyph}</a>`;
    return html`
      <a class="brand" href="#" aria-label="Home">${icons.layers}</a>
      <nav>
        ${item("Organization", icons.building, true)}
        ${item("Dashboard", icons.gauge)}
        ${item("Fleet", icons.sitemap)}
        ${item("Missions", icons.map)}
        ${item("Pipeline", icons.conveyor)}
        ${item("Packages", icons.box)}
        <div class="spacer"></div>
        ${item("Settings", icons.gear)}
        ${item("Help", icons.help)}
      </nav>
      <div class="account">
        <a class="me" href="#" aria-label="Account">${icons.user}</a>
        <a href="#" aria-label="Sign out">${icons.logout}</a>
      </div>`;
  }
}

@customElement("flight-map")
export class FlightMap extends LitElement {
  static styles = [base, css`
    :host { display: block; position: relative; }
    .view { display: block; width: 100%; height: auto; }
    .label { font: 500 24px Roboto, sans-serif; fill: #fff; stroke: #23272d; stroke-width: 5px; stroke-linejoin: round; paint-order: stroke; }
    .water { fill: #6cb9e4; font-style: italic; }
    .street { font-size: 23px; }
    .shield { font: 700 18px Roboto, sans-serif; text-anchor: middle; fill: #23272d; }
    .light { fill: #fff; }
    .wordmark { font: 700 34px Roboto, sans-serif; fill: #fff; stroke: #666c66; stroke-width: 4px; stroke-opacity: .7; stroke-linejoin: round; paint-order: stroke; }
    .tools { position: absolute; top: 12px; left: 12px; right: 12px; display: flex; gap: 12px; }
    .tool { width: 56px; height: 56px; padding: 0; border: 0; border-radius: 50%; display: grid; place-items: center; background: #0f223f; color: #fff; }
    .tool .icon { height: 28px; }
    .tool:first-child .icon { height: 24px; }
    .tool:last-child { margin-left: auto; }
    .about { position: absolute; right: 20px; bottom: 20px; width: 48px; height: 48px; padding: 0; border: 0; border-radius: 50%; display: grid; place-items: center; background: #fff; color: #000; }
    .about .icon { height: 30px; }
  `];
  render() {
    return html`
      <svg class="view" viewBox="0 0 596 1000" role="img" aria-label="Flight path on satellite map">
        ${aerial}
        ${mapLabels}
        <g transform="translate(67 403) scale(.3333)">
          <path d=${track} fill="none" stroke="#e3212f" stroke-width="13" stroke-linejoin="round"/>
          ${waypoints.map(([x, y]) => svg`<circle cx=${x} cy=${y} r="13" fill="#e3212f" stroke="#ea9230" stroke-width="5"/>`)}
        </g>
        ${mapbox}
      </svg>
      <div class="tools">
        <button class="tool" aria-label="Full screen">${icons.expand}</button>
        <button class="tool" aria-label="Copy">${icons.copy}</button>
        <button class="tool" aria-label="Centre on vehicle">${icons.pin}</button>
      </div>
      <button class="about" aria-label="Attribution">${icons.info}</button>`;
  }
}

@customElement("path-plot")
export class PathPlot extends LitElement {
  static styles = [base, css`
    :host { display: block; }
    .plot { display: block; width: 100%; height: auto; font: 24px "Liberation Sans", Arial, sans-serif; fill: #444; }
    .title { font-size: 28px; text-anchor: middle; }
    .x { text-anchor: middle; }
    .y { text-anchor: end; }
    .grid { stroke: #ececec; stroke-width: 2px; fill: none; }
    .zero { stroke: #444; stroke-width: 2px; }
  `];
  render() {
    return html`
      <svg class="plot" viewBox="0 0 596 1000" role="img" aria-label="Local position plot">
        <defs><clipPath id="area"><rect x="118" y="50" width="417" height="861"/></clipPath></defs>
        ${xTicks.slice(1).map(([x]) => svg`<path class="grid" d="M${x} 50V910"/>`)}
        ${yTicks.filter(([, t]) => t !== "0").map(([y]) => svg`<path class="grid" d="M118 ${y}H534"/>`)}
        <path class="grid" d="M118 50V910H534"/>
        <path class="zero" d="M224 50V910M118 469H534"/>
        <g clip-path="url(#area)">
          <g transform="translate(87 378) scale(.348)">
            <path d=${track} fill="none" stroke="#228b00" stroke-width="34" stroke-linecap="round" stroke-linejoin="round"/>
            <path d=${track} fill="none" stroke="#e3212f" stroke-width="13" stroke-linejoin="round"/>
            ${waypoints.map(([x, y]) => svg`<circle cx=${x} cy=${y} r="17" fill="#e68a30"/>`)}
          </g>
        </g>
        <rect x="120" y="49" width="278" height="118" fill="#fff"/>
        <circle cx="159" cy="62" r="6" fill="#228b00"/>
        <path d="M129 100H189" stroke="#e3212f" stroke-width="4"/>
        <circle cx="159" cy="138" r="6" fill="#e68a30"/>
        <text x="199" y="71">Setpoint</text>
        <text x="199" y="109">Estimated</text>
        <text x="199" y="147">Position setpoints</text>
        ${xTicks.map(([x, t]) => svg`<text class="x" x=${x} y="940">${t}</text>`)}
        ${yTicks.map(([y, t]) => svg`<text class="y" x="112" y=${y + 8}>${t}</text>`)}
        <text class="title" transform="translate(43 480) rotate(-90)">[m]</text>
        <text class="title" x="327" y="993">[m]</text>
      </svg>`;
  }
}

@customElement("app-root")
export class AppRoot extends LitElement {
  static styles = [base, css`
    :host { display: grid; grid-template-columns: 128px minmax(0, 1fr); height: 100vh; overflow: hidden; background: #fff; color: #000; font: 400 28px/42px Inter, sans-serif; }
    main { display: flex; flex-direction: column; min-height: 0; padding-left: 64px; }
    h1 { margin: 0; padding: 40px 64px 40px 0; font-size: 54px; line-height: 72px; font-weight: 600; color: #11181c; }
    .progress { margin-right: 64px; height: 32px; flex: none; border-radius: 8px; background: #e4e4e7; }
    .done { height: 100%; border-radius: 8px; background: linear-gradient(135deg, #93c5fd 25%, #3b82f6 25% 50%, #93c5fd 50% 75%, #3b82f6 75%) 0 0 / 80px 80px; }
    .body { flex: 1; min-height: 0; margin-top: 24px; display: flex; align-items: stretch; }
    .menu { width: 147px; flex: none; }
    .btn { height: 64px; display: flex; align-items: center; gap: 24px; padding: 0 28px; border: 2px solid #dfe3e6; border-radius: 12px; background: #fbfcfd; color: #11181c; font-size: 26px; line-height: 40px; font-weight: 500; white-space: nowrap; }
    .btn .icon { height: 26px; }
    .btn .bars { height: 24px; }
    .btn .caret { height: 12px; }
    .btn.hot { background: #f1f3f5; border-color: #d7dbdf; }
    .cards { flex: 1; min-width: 0; padding-right: 64px; overflow: hidden; display: flex; flex-direction: column; gap: 48px; }
    .card { border: 2px solid #e4e4e4; border-radius: 8px; flex: none; }
    .head { display: flex; justify-content: space-between; padding: 32px; border-bottom: 2px solid #e4e4e4; }
    h2 { margin: 0; font-size: 36px; }
    .id h2 { display: flex; align-items: center; gap: 12px; font-size: 35px; line-height: 38px; font-weight: 400; margin: 0 0 7px; padding-left: 3px; color: #0e86f7; }
    .id h2 .icon { height: 31px; }
    .when { color: #71717a; }
    .unit { display: flex; align-items: center; gap: 16px; font-weight: 500; color: #52525b; }
    .unit span, .unit a { display: flex; align-items: center; gap: 9px; }
    .unit a { color: #0e86f7; gap: 5px; }
    .unit .icon { height: 27px; }
    .actions { display: flex; align-items: flex-start; gap: 48px; }
    .buttons { display: flex; flex-direction: column; gap: 16px; }
    .badge { margin-top: 7px; height: 38px; padding: 0 17px; border: 2px solid #f9c6c6; border-radius: 19px; background: #fff8f8; color: #cd2b31; font-size: 19px; line-height: 32px; font-weight: 700; }
    dl { margin: 0; display: grid; grid-template-columns: repeat(4, minmax(0, 1fr)); gap: 48px 32px; padding: 32px 32px 48px; }
    dt { font-size: 26px; line-height: 39px; color: #52525b; }
    .large { font-size: 28px; line-height: 42px; }
    dd { margin: 0; }
    .path h2 { line-height: 64px; font-weight: 600; }
    .rate { display: flex; width: 320px; height: 64px; border: 2px solid #e4e4e4; border-radius: 12px; box-shadow: 0 2px 4px rgba(0, 0, 0, .06); color: #52525b; overflow: hidden; }
    .rate input { flex: 1; min-width: 0; border: 0; border-right: 2px solid #e4e4e4; padding: 0 24px; font: 26px Inter, sans-serif; color: #3f3f46; background: #fff; outline: 0; }
    .rate label { padding: 0 24px; line-height: 60px; }
    .split { display: grid; grid-template-columns: repeat(2, minmax(0, 1fr)); gap: 32px; padding: 32px; }
    .scroll { width: 30px; flex: none; display: flex; flex-direction: column; align-items: center; padding: 12px 0; background: #fbfbfb; }
    .up, .down { border: 9px solid transparent; }
    .up { border-top: 0; border-bottom-color: #8b8b8b; }
    .down { border-bottom: 0; border-top-color: #8b8b8b; }
    .track { flex: 1; padding: 15px 0 8px; }
    .thumb { width: 18px; height: 60%; border-radius: 9px; background: #8b8b8b; }
  `];
  render() {
    return html`
      <side-nav></side-nav>
      <main>
        <h1>00185-2025-04-21_10-21-00.ulg</h1>
        <div class="progress" role="progressbar" aria-label="Loading" aria-valuenow="9" aria-valuemin="0" aria-valuemax="100"><div class="done" style="width:9%"></div></div>
        <div class="body">
          <div class="menu"><button class="btn" aria-label="Sections">${icons.bars}</button></div>
          <div class="cards">
            <section class="card">
              <div class="head">
                <div class="id">
                  <h2>${icons.plane}<a href="#">MXNTQT</a></h2>
                  <div class="when">on 4/21/2025, 10:21:38 AMin Sunnyvale, USA</div>
                  <div class="unit"><a href="#">${icons.drone}Astro DV21 (Nate)</a><span>${icons.finger}9077b9...eec964</span></div>
                </div>
                <div class="actions">
                  <div class="buttons">
                    <button class="btn hot">${icons.cloud}Download Log</button>
                    <button class="btn">Export Flight Log${icons.caret}</button>
                  </div>
                  <div class="badge">CRITICAL</div>
                </div>
              </div>
              <dl>${details.map(([k, v]) => html`<div><dt class=${k === "Vehicle Type" ? "large" : ""}>${k}</dt><dd>${v}</dd></div>`)}</dl>
            </section>
            <section class="card path">
              <div class="head">
                <h2>Flight Path</h2>
                <div class="rate"><input id="rate" type="text" inputmode="numeric" .value=${"1"} /><label for="rate">points/sec</label></div>
              </div>
              <div class="split"><flight-map></flight-map><path-plot></path-plot></div>
            </section>
          </div>
          <div class="scroll" aria-hidden="true"><div class="up"></div><div class="track"><div class="thumb"></div></div><div class="down"></div></div>
        </div>
      </main>`;
  }
}
